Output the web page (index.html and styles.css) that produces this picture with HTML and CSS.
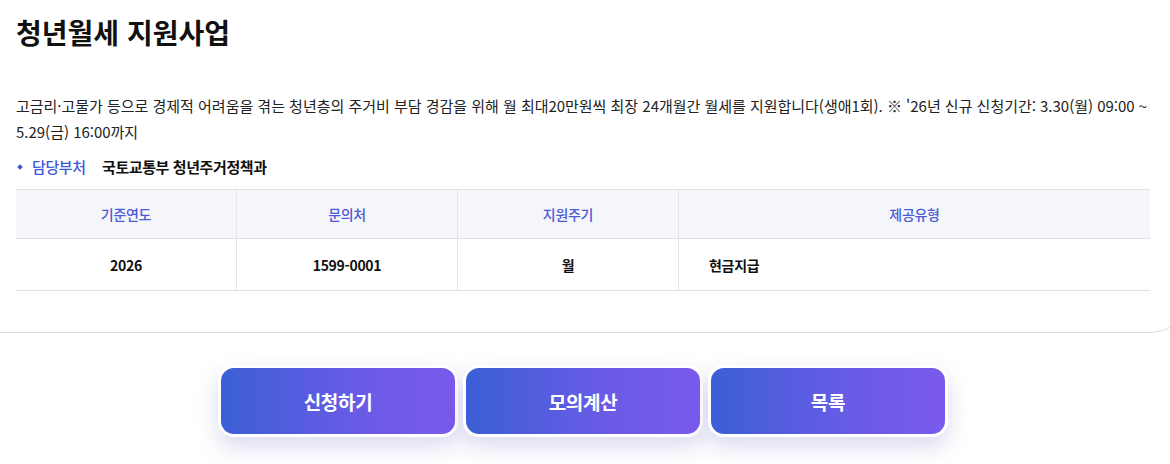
FILE: index.html
```html
<!DOCTYPE html>
<html lang="ko">
<head>
<meta charset="utf-8">
<title>청년월세 지원사업</title>
<link rel="stylesheet" href="styles.css">
</head>
<body>
<main class="page">
  <section class="card">
    <div class="card-inner">
      <h1 class="title">청년월세 지원사업</h1>
      <p class="desc">고금리·고물가 등으로 경제적 어려움을 겪는 청년층의 주거비 부담 경감을 위해 월 최대20만원씩 최장 24개월간 월세를 지원합니다(생애1회). ※ '26년 신규 신청기간: 3.30(월) 09:00 ~ 5.29(금) 16:00까지</p>
      <div class="dept">
        <span class="dept-label">담당부처</span>
        <span class="dept-value">국토교통부 청년주거정책과</span>
      </div>
      <table class="info">
        <thead>
          <tr>
            <th class="c1">기준연도</th>
            <th class="c2">문의처</th>
            <th class="c3">지원주기</th>
            <th class="c4">제공유형</th>
          </tr>
        </thead>
        <tbody>
          <tr>
            <td class="center">2026</td>
            <td class="center">1599-0001</td>
            <td class="center">월</td>
            <td class="left">현금지급</td>
          </tr>
        </tbody>
      </table>
    </div>
  </section>
  <nav class="actions">
    <a class="btn" href="#">신청하기</a>
    <a class="btn" href="#">모의계산</a>
    <a class="btn" href="#">목록</a>
  </nav>
</main>
</body>
</html>
```

FILE: styles.css
```css
html {
  overflow: hidden;
  background: #ffffff;
}
body {
  margin: 0;
  padding: 0;
  font-family: "Noto Sans CJK KR", "Noto Sans", sans-serif;
  color: #222222;
}
.page {
  width: 1170px;
  padding-bottom: 40px;
}
.card {
  margin-left: -60px;
  width: 1250px;
  border-bottom: 1px solid #dcdcdf;
  border-radius: 0 0 40px 40px;
  box-sizing: border-box;
}
.card-inner {
  padding: 12px 0 41px 76px;
  width: 1134px;
}
.title {
  margin: 0;
  font-size: 28px;
  line-height: 40px;
  font-weight: 700;
  letter-spacing: 0;
  color: #111111;
}
.desc {
  margin: 41px 0 0 0;
  font-size: 15px;
  line-height: 26px;
  letter-spacing: -0.02px;
  color: #222222;
}
.dept {
  display: flex;
  align-items: center;
  margin-top: 12px;
  font-size: 15px;
  line-height: 20px;
  letter-spacing: -0.4px;
}
.dept-label {
  position: relative;
  padding-left: 16px;
  width: 70px;
  color: #3d58d8;
  font-weight: 500;
}
.dept-label::before {
  content: "";
  position: absolute;
  left: 2px;
  top: 8px;
  width: 4px;
  height: 4px;
  background: #3d58d8;
  transform: rotate(45deg);
}
.dept-value {
  font-weight: 700;
  color: #111111;
}
.info {
  margin-top: 12px;
  width: 1134px;
  border-collapse: collapse;
  table-layout: fixed;
  font-size: 14px;
  letter-spacing: -0.3px;
}
.info th {
  height: 48px;
  background: #f5f6fa;
  color: #4a5ad8;
  font-weight: 500;
  border-top: 1px solid #dfe0e4;
  border-bottom: 1px solid #dfe0e4;
  border-left: 1px solid #e4e5e9;
  padding: 0;
}
.info th:first-child,
.info td:first-child {
  border-left: none;
}
.info .c1, .info .c2, .info .c3 { width: 220px; }
.info td {
  height: 51px;
  padding: 0;
  font-weight: 700;
  color: #111111;
  border-bottom: 1px solid #dfe0e4;
  border-left: 1px solid #e4e5e9;
}
.info td.center { text-align: center; }
.info td.left { text-align: left; padding-left: 30px; }
.actions {
  display: flex;
  justify-content: center;
  gap: 5px;
  padding-top: 32px;
  padding-right: 4px;
}
.btn {
  display: flex;
  align-items: center;
  justify-content: center;
  width: 240px;
  height: 72px;
  box-sizing: border-box;
  border: 3px solid #ffffff;
  border-radius: 16px;
  background: linear-gradient(90deg, #3b5fd6 0%, #6a5be6 60%, #7a5aeb 100%);
  color: #ffffff;
  font-size: 19px;
  font-weight: 700;
  letter-spacing: -0.3px;
  text-decoration: none;
  box-shadow: 0 10px 22px rgba(90, 90, 190, 0.22);
}
```
